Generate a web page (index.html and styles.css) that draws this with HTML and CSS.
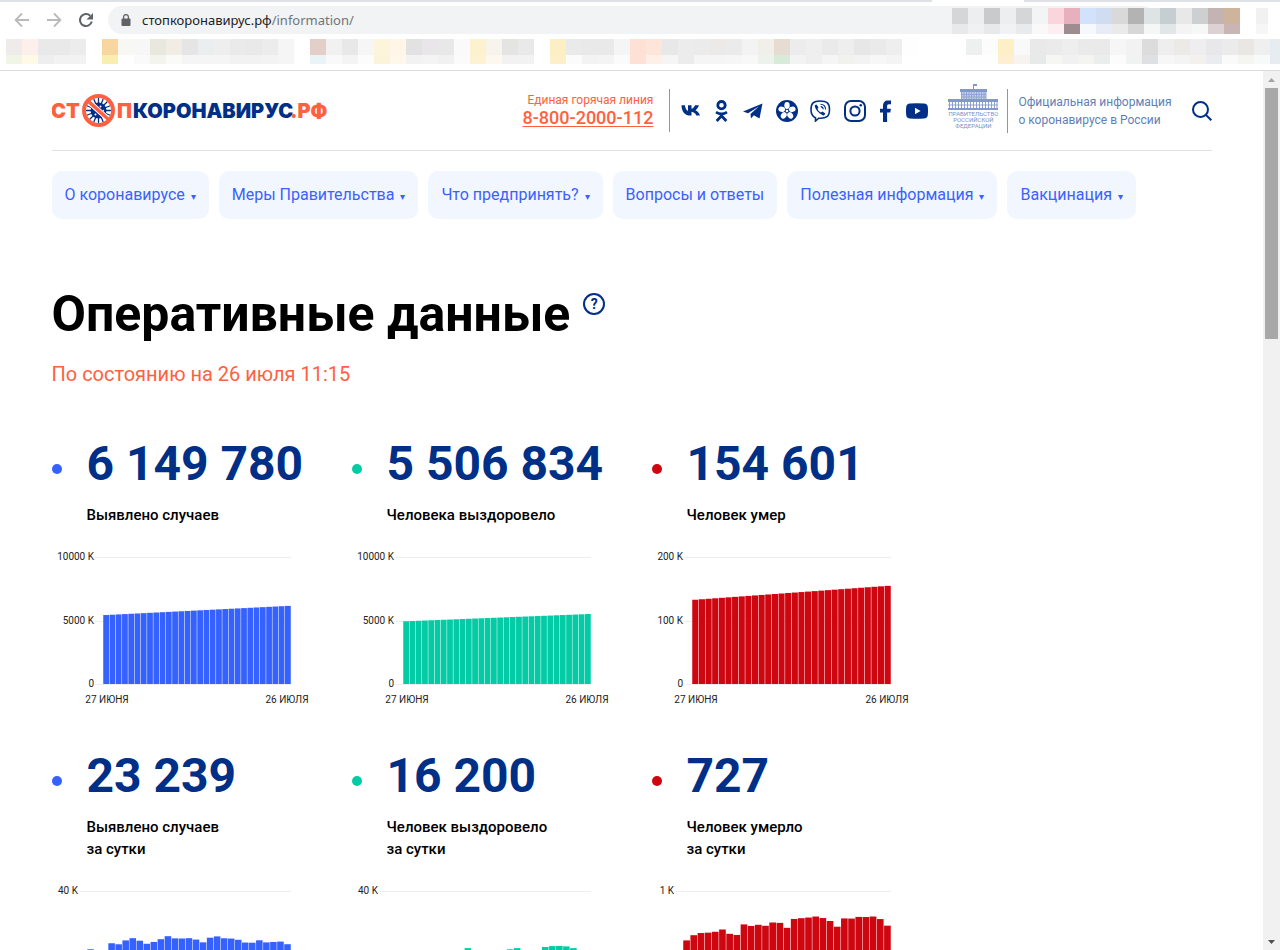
FILE: index.html
```html
<!DOCTYPE html>
<html lang="ru">
<head>
<meta charset="utf-8">
<title>Оперативные данные</title>
<link rel="stylesheet" href="styles.css">
</head>
<body>
<div class="browser">
  <div class="tabs-edge"><span class="active-tab"></span></div>
  <div class="toolbar">
    <button class="tool" aria-label="Назад"><svg width="16" height="16" viewBox="0 0 16 16" fill="none" stroke="#bababc" stroke-width="1.8"><path d="M15 8H2M8 1.5 1.6 8 8 14.5"/></svg></button>
    <button class="tool" aria-label="Вперёд"><svg width="16" height="16" viewBox="0 0 16 16" fill="none" stroke="#bababc" stroke-width="1.8"><path d="M1 8h13M8 1.5 14.4 8 8 14.5"/></svg></button>
    <button class="tool" aria-label="Обновить"><svg width="16" height="16" viewBox="0 0 16 16"><path d="M13.8 9.5A6 6 0 1 1 12.2 3.8" fill="none" stroke="#5f6368" stroke-width="2"/><path d="M15 1v6.500H8.500z" fill="#5f6368"/></svg></button>
    <div class="address">
      <svg width="10" height="13" viewBox="0 0 10 13"><rect y="4.5" x=".5" width="9" height="7.5" rx="1" fill="#5f6368"/><path d="M2.6 5V3a2.4 2.4 0 0 1 4.8 0v2" fill="none" stroke="#5f6368" stroke-width="1.3"/></svg>
      <span>стопкоронавирус.рф<span class="path">/information/</span></span>
    </div>
    <svg class="extensions" id="extensions" width="316" height="27"></svg>
  </div>
  <svg class="bookmarks" id="bookmarks" height="26"></svg>
</div>
<div class="viewport">
<div class="page">
<div class="container">
  <header class="header">
    <a class="logo" href="#" aria-label="стопкоронавирус.рф">
      <svg width="277" height="36" viewBox="0 0 277 36">
        <g class="logo-text">
          <text x="-1" y="25" fill="#ff6140">СТ</text>
          <text x="65" y="25" fill="#ff6140">П</text>
          <text x="81" y="25" fill="#002f87">КОРОНАВИРУС</text>
          <text x="238" y="25" fill="#ff6140">.РФ</text>
        </g>
        <g transform="translate(46.500 17.500)">
          <g stroke="#002f87" stroke-width="1.3" stroke-linecap="round"><path d="M0-12V12M-12 0H12M-8.500-8.500 8.500 8.500M-8.500 8.500 8.500-8.500M-4.500-11 4.500 11M4.500-11-4.500 11M-11-4.500 11 4.500M-11 4.500 11-4.500"/></g>
          <circle r="8" fill="#002f87"/>
          <g fill="#fff"><circle cx="2" cy="-4" r="1"/><circle cx="-3" cy="4" r="1"/><circle cx="5" cy="0" r=".7"/></g>
          <path d="M-10-9 10 9" stroke="#fff" stroke-width="5.500"/>
          <path d="M-10-9 10 9" stroke="#ff6140" stroke-width="3.600"/>
          <circle r="14.500" fill="none" stroke="#ff6140" stroke-width="4"/>
        </g>
      </svg>
    </a>
    <div class="hotline"><span>Единая горячая линия</span><a href="tel:88002000112">8-800-2000-112</a></div>
    <nav class="social" aria-label="Социальные сети">
      <a href="#" aria-label="ВКонтакте"><svg width="21" height="22" viewBox="0 0 21 22"><path d="M.5 5.200H3.900C4.300 8.500 5.700 10.400 7 11V5.200H10.500V8.800C12 8.500 13.300 6.800 14 5.200H17.900C17.200 7.500 15.600 9.300 14.500 10.200C16.200 11.100 17.900 12.500 19 15.500H15.300C14.600 13.600 12.700 12 10.500 11.800V15.500H9.500C4 15.500.7 12 .5 5.200Z"/></svg></a>
      <a href="#" aria-label="Одноклассники"><svg width="16" height="22" viewBox="0 0 16 22"><g fill="none" stroke="currentColor" stroke-width="2.800"><circle cx="7.500" cy="5.200" r="3.700"/><path d="M2 12.200Q7.500 15.800 13 12.200M2.700 21 7.500 15.800 12.300 21"/></g></svg></a>
      <a href="#" aria-label="Telegram"><svg width="22" height="22" viewBox="0 0 22 22"><path d="M1 11.500 20.500 3.500 17.500 18.500 11.800 15.200 9 18.500 8.500 14 16.800 6.500 6 13.200Z"/></svg></a>
      <a href="#" aria-label="Мессенджер"><svg width="22" height="22" viewBox="0 0 22 22"><circle cx="11" cy="11" r="11"/><g fill="#fff"><ellipse cx="11" cy="5.500" rx="2.700" ry="3.400"/><ellipse cx="11" cy="5.500" rx="2.700" ry="3.400" transform="rotate(72 11 11)"/><ellipse cx="11" cy="5.500" rx="2.700" ry="3.400" transform="rotate(144 11 11)"/><ellipse cx="11" cy="5.500" rx="2.700" ry="3.400" transform="rotate(216 11 11)"/><ellipse cx="11" cy="5.500" rx="2.700" ry="3.400" transform="rotate(288 11 11)"/><circle cx="11" cy="11" r="1.300"/></g></svg></a>
      <a href="#" aria-label="Viber"><svg width="22" height="22" viewBox="0 0 22 22"><path d="M10 1C3.500 1 1 3.200 1 9.500C1 14 2.300 16.500 5.500 17.700V21L8.700 18.200C16.500 18.700 19.500 16.500 19.500 9.500C19.500 3.200 17 1 10 1Z" fill="none" stroke="currentColor" stroke-width="1.600"/><path d="M6.400 4.400 8.500 7.200 7.600 8.800C8 10.600 9.200 11.800 10.900 12.400L12.500 11.500 15.300 13.600C14.900 15.100 13.900 15.800 12.700 15.200C8.600 13.200 6 10.500 4.800 6.500C4.500 5.400 5.300 4.600 6.400 4.400Z"/><path d="M10.500 4.200C13.800 4.300 15.500 6.200 15.600 9.500M10.700 6.600C12.400 6.800 13.200 7.700 13.300 9.300" fill="none" stroke="currentColor" stroke-width="1.100"/></svg></a>
      <a href="#" aria-label="Instagram"><svg width="22" height="22" viewBox="0 0 22 22"><g fill="none" stroke="currentColor" stroke-width="2"><rect x="1" y="1" width="20" height="20" rx="6"/><circle cx="11" cy="11" r="4.600"/></g><circle cx="16.800" cy="5.200" r="1.300"/></svg></a>
      <a href="#" aria-label="Facebook"><svg width="16" height="22" viewBox="0 0 16 22"><path d="M5 22V12.500H2V8.700H5V6C5 2.500 6.800.5 10 .5H13V4.200H11C9.500 4.200 9.100 4.900 9.100 6.200V8.700H12.900L12.300 12.500H9.100V22Z"/></svg></a>
      <a href="#" aria-label="YouTube"><svg width="22" height="22" viewBox="0 0 22 22"><path fill-rule="evenodd" d="M4 3.500Q11 2.800 18 3.500Q21.500 3.700 21.800 7Q22.200 11 21.800 15Q21.500 18.200 18 18.500Q11 19.200 4 18.500Q.5 18.200.2 15Q-.2 11 .2 7Q.5 3.700 4 3.500ZM9 7.700V14.300L14.600 11Z"/></svg></a>
    </nav>
    <div class="gov">
      <svg width="50" height="27" viewBox="0 0 50 27">
        <g fill="#8298cc"><path d="M25 0h4v2h-3v4h-1z"/><rect x="12" y="5" width="27" height="3"/><path d="M0 15h13v-1h25v1h12v3H0z"/><rect y="24" width="50" height="2"/></g>
        <path fill="#c3cee7" d="M13 8h25v7H13z"/>
        <g stroke="#93a5d2" fill="none"><path d="M13.500 8v7M16 8v7M18.500 8v7M21 8v7M23.500 8v7M26 8v7M28.500 8v7M31 8v7M33.500 8v7M36 8v7M38 8v7M13 10.500h25M13 13h25"/></g>
        <g stroke="#8da0cf" fill="none"><path d="M1.500 18v6M4.500 18v6M7.500 18v6M10.500 18v6M13.500 18v6M16.500 18v6M19.500 18v6M22.500 18v6M25.500 18v6M28.500 18v6M31.500 18v6M34.500 18v6M37.500 18v6M40.500 18v6M43.500 18v6M46.500 18v6M49 18v6M0 21h50"/></g>
      </svg>
      <span>ПРАВИТЕЛЬСТВО<br>РОССИЙСКОЙ<br>ФЕДЕРАЦИИ</span>
    </div>
    <p class="official">Официальная информация<br>о коронавирусе в России</p>
    <button class="search" aria-label="Поиск"><svg width="20" height="20" viewBox="0 0 20 20" fill="none" stroke="#002f87" stroke-width="2"><circle cx="8.500" cy="8.500" r="7.500"/><path d="m14 14 5.300 5.300"/></svg></button>
  </header>
  <nav class="menu" aria-label="Основное меню">
    <button>О коронавирусе <i>▾</i></button>
    <button>Меры Правительства <i>▾</i></button>
    <button>Что предпринять? <i>▾</i></button>
    <a href="#">Вопросы и ответы</a>
    <button>Полезная информация <i>▾</i></button>
    <button>Вакцинация <i>▾</i></button>
  </nav>
  <main>
    <div class="title">
      <h1>Оперативные данные</h1>
      <button class="help" aria-label="Справка">?</button>
    </div>
    <p class="updated">По состоянию на 26 июля 11:15</p>
    <section class="stats">
      <article class="stat blue"><h2>6 149 780</h2><p>Выявлено случаев</p><svg class="chart" data-chart="cases"></svg></article>
      <article class="stat green"><h2>5 506 834</h2><p>Человека выздоровело</p><svg class="chart" data-chart="recovered"></svg></article>
      <article class="stat red"><h2>154 601</h2><p>Человек умер</p><svg class="chart" data-chart="deaths"></svg></article>
      <article class="stat blue"><h2>23 239</h2><p>Выявлено случаев<br>за сутки</p><svg class="chart" data-chart="casesDaily"></svg></article>
      <article class="stat green"><h2>16 200</h2><p>Человек выздоровело<br>за сутки</p><svg class="chart" data-chart="recoveredDaily"></svg></article>
      <article class="stat red"><h2>727</h2><p>Человек умерло<br>за сутки</p><svg class="chart" data-chart="deathsDaily"></svg></article>
    </section>
  </main>
</div>
</div>
<div class="scrollbar" aria-hidden="true">
  <svg width="17" height="17" viewBox="0 0 17 17"><path d="M5 11 8.500 7 12 11z" fill="#a3a3a3"/></svg>
  <span class="thumb"></span>
  <svg width="17" height="17" viewBox="0 0 17 17"><path d="M5 7 8.500 11 12 7z" fill="#505050"/></svg>
</div>
</div>
<script src="script.js"></script>
</body>
</html>
```

FILE: styles.css
```css
* { box-sizing: border-box; }
body {
  margin: 0;
  height: 100vh;
  overflow: hidden;
  display: flex;
  flex-direction: column;
  background: #fff;
  font-family: Roboto, "Liberation Sans", sans-serif;
  color: #000;
}
h1, h2, p { margin: 0; }
a { color: inherit; text-decoration: none; }
button { border: 0; padding: 0; background: none; font: inherit; color: inherit; cursor: pointer; }
svg { display: block; }

.browser { flex: none; height: 71px; border-bottom: 1px solid #dadbdc; overflow: hidden; }
.tabs-edge { height: 2px; background: #dee1e6; display: flex; justify-content: flex-end; padding-right: 256px; }
.active-tab { width: 92px; background: #fff; }
.toolbar { display: flex; align-items: center; height: 36px; padding: 0 12px 0 14px; gap: 16px; }
.tool { flex: none; width: 16px; }
.address {
  flex: 1;
  display: flex;
  align-items: center;
  gap: 11px;
  height: 28px;
  padding-left: 13px;
  margin-left: -2px;
  border-radius: 14px;
  background: #f1f3f4;
  font-family: "Noto Sans", "Open Sans", sans-serif;
  font-size: 13px;
  color: #202124;
}
.path { color: #70757a; }
.extensions { flex: none; margin-left: -220px; }
.bookmarks { width: 100%; margin-top: 1px; }

.viewport { flex: 1; min-height: 0; display: flex; }
.page { flex: 1; min-width: 0; overflow-x: hidden; overflow-y: auto; scrollbar-width: none; }
.container { max-width: 1160px; margin: 0 auto; }
.scrollbar { flex: none; width: 17px; background: #f1f1f1; display: flex; flex-direction: column; }
.thumb { width: 13px; height: 251px; margin: 0 2px auto; background: #a8a8a8; }

.header { display: flex; align-items: center; height: 80px; border-bottom: 1px solid #dfe1e5; }
.logo { margin-right: auto; }
.logo-text { font: 900 20px Inter, Roboto, sans-serif; }
.hotline {
  display: flex;
  flex-direction: column;
  align-items: flex-end;
  justify-content: center;
  height: 43px;
  padding-right: 16px;
  border-right: 1px solid #7f97c3;
  font-size: 12px;
  line-height: 14px;
  color: #ff6140;
}
.hotline a { font-size: 18px; font-weight: 500; line-height: 21px; text-decoration: underline; text-underline-offset: 2px; text-decoration-thickness: 1px; }
.social { display: flex; align-items: center; gap: 12px; margin-left: 11px; color: #002f87; fill: #002f87; }
.gov {
  width: 50px;
  margin: 0 9px 0 20px;
  padding-bottom: 8px;
  color: #7b92c8;
  text-align: center;
  font-size: 6px;
  line-height: 6px;
  white-space: nowrap;
  display: flex;
  flex-direction: column;
  align-items: center;
}
.official {
  border-left: 1px solid #7f97c3;
  height: 44px;
  padding: 4px 0 0 10px;
  margin-right: 20px;
  font-size: 12px;
  line-height: 18px;
  color: #5f7fb5;
}

.menu { display: flex; gap: 10px; margin-top: 20px; }
.menu > * {
  height: 48px;
  padding: 0 13px;
  border-radius: 10px;
  background: #f2f6ff;
  color: #3b61ff;
  font-size: 16px;
  line-height: 48px;
  white-space: nowrap;
}
.menu i { font-style: normal; font-size: 10px; margin-left: 2px; }

.title { display: flex; gap: 13px; margin-top: 66px; }
h1 { font-size: 50px; line-height: 58px; font-weight: 700; }
.help {
  width: 22px;
  height: 22px;
  margin-top: 8px;
  border: 2px solid #002f87;
  border-radius: 50%;
  color: #002f87;
  font-size: 14px;
  font-weight: 700;
  line-height: 18px;
}
.updated { margin-top: 19px; font-size: 20px; line-height: 24px; color: #ff6140; }

.stats { display: grid; grid-template-columns: repeat(3, 300px); margin-top: 48px; row-gap: 27px; }
.stat { --tone: #3561ff; }
.stat.green { --tone: #03cba5; }
.stat.red { --tone: #cd0610; }
.stat h2 { display: flex; align-items: center; font-size: 48px; line-height: 60px; font-weight: 700; color: #002f87; white-space: nowrap; }
.stat h2::before { content: ""; width: 10px; height: 10px; margin: 10px 25px 0 0; border-radius: 50%; background: var(--tone); }
.stat p { margin: 10px 0 23px 35px; font-size: 15px; line-height: 22px; font-weight: 500; }
.chart { width: 270px; height: 170px; }
.chart text { font-size: 10px; fill: #222; }
.chart .grid { stroke: #eeeeee; }
.chart .bar { fill: var(--tone); }
```

FILE: script.js
```js
const NS = "http://www.w3.org/2000/svg";

function add(parent, name, attrs, text) {
  const el = document.createElementNS(NS, name);
  for (const key in attrs) el.setAttribute(key, attrs[key]);
  if (text) el.textContent = text;
  parent.appendChild(el);
  return el;
}

function ramp(from, to) {
  return Array.from({ length: 30 }, (_, i) => from + (to - from) * i / 29);
}

const charts = {
  cases: { max: 10000, labels: ["10000 K", "5000 K", "0"], left: 51, data: ramp(5430, 6150) },
  recovered: { max: 10000, labels: ["10000 K", "5000 K", "0"], left: 51, data: ramp(4940, 5507) },
  deaths: { max: 200, labels: ["200 K", "100 K", "0"], left: 40, data: ramp(132.7, 154.6) },
  casesDaily: { max: 40000, labels: ["40 K", "20 K", "0"], left: 35, data: [21650, 20616, 21042, 23543, 23218, 24439, 25142, 24353, 23378, 23962, 24818, 25766, 25082, 25033, 25140, 24702, 23827, 25293, 25704, 25116, 25018, 24633, 23770, 23704, 24471, 23811, 23947, 24072, 23239] },
  recoveredDaily: { max: 40000, labels: ["40 K", "20 K", "0"], left: 35, data: [15300, 16500, 17900, 18100, 18400, 19100, 18700, 17600, 18300, 19900, 20300, 22000, 19900, 17200, 18600, 19800, 20600, 21650, 22000, 20200, 18100, 19500, 22350, 22650, 22700, 22550, 22000, 19200, 16200] },
  deathsDaily: { max: 1000, labels: ["1 K", "0.5 K", "0"], left: 31, data: [611, 652, 669, 672, 679, 697, 663, 654, 737, 725, 734, 726, 752, 749, 710, 780, 786, 791, 799, 787, 764, 719, 784, 783, 796, 795, 799, 779, 727] }
};

document.querySelectorAll("[data-chart]").forEach(svg => {
  const { max, labels, left, data } = charts[svg.dataset.chart];
  const right = 239, top = 8, height = 127, labelEnd = left - 9;
  labels.forEach((label, i) => {
    const y = top + Math.round(height * i / 2);
    add(svg, "text", { x: labelEnd, y: y + 3, "text-anchor": "end" }, label);
    add(svg, "line", { class: "grid", x1: labelEnd + 1, x2: right, y1: y + 0.5, y2: y + 0.5 });
  });
  const step = (right - left) / data.length;
  data.forEach((value, i) => {
    const h = height * value / max;
    add(svg, "rect", { class: "bar", x: left + i * step + 0.25, y: top + height - h, width: step - 0.5, height: h });
  });
  add(svg, "text", { x: left + 4, y: 154, "text-anchor": "middle" }, "27 ИЮНЯ");
  add(svg, "text", { x: right - 4, y: 154, "text-anchor": "middle" }, "26 ИЮЛЯ");
});

// Tile colours are hex strings; "-" leaves a gap.
function tiles(id, startX, y, rows) {
  const svg = document.getElementById(id);
  rows.forEach(([height, colours]) => {
    colours.split(" ").forEach((c, i) => {
      if (c !== "-") add(svg, "rect", { x: startX + i * 16, y, width: 16, height, fill: "#" + c });
    });
    y += height;
  });
}

tiles("bookmarks", 6, 0, [
  [16, "f0ebeb fdf0ec e9e9e9 e9e9e9 ececec - f7d6a0 f7f7f3 f7f7f7 e8e8df f1ede5 e5e5e5 ebeeee eeeeee eaeaea e9e9e9 ececec f5f5f5 - e4cfc8 f1f1f1 e8e8e8 f6f6f6 fdf4dc fff6e8 e2e2e2 e9e6ea e8e8e8 fafafa fcf2cf f7f4ed e4e4e2 e9e9e9 - fcefc4 eaeaea e9e9e9 e9e9e9 f5f5f5 ffe0d4 fde5da e8e8e8 ececec ebebeb ece9e9 ebebeb f3f3f3 f0efe9 e6dcd2 ececec efefef eaeaea eeeeee e7e7e7 eaeaea eeeeee fefefe - - - edf0ef fcfcfc fdf0c6 f9f9f9 e9e9e9 ebebeb eeeeee eaeaea eaeaea f6f6f6 f2f2f2 dcdcdc eeeeee eceae7 eeeef0 e8e8ea ebebeb e8e7e4 efefef e6ecf2"],
  [9, "f0f5e5 fff9e8 eeeeee f2f2f2 f2f2f2 - f9edb0 fefefe fafafa f4f4ef fafaf7 f5f5f5 f5f5f5 f5f5f5 f2f2f2 f2f2f2 f3f3f3 f5f5f5 - eaf4f7 f9f9f9 f4f4f4 fcfcfc fcf4da fff7e9 f2f2f2 f4f4f4 f1f1f1 fbfbfb fdf3d3 fcf8ee f2f2f2 f2f2f2 - fcefc9 fbfbfb f3f3f3 f4f4f4 fbfbfb ffe0d4 fff0e7 f5f5f5 ececec f5f5f5 f5f5f5 f6f6f6 f8f8f8 edf2ed d8ead8 f3f3f3 efefef f5f5f5 f1f1ee f3f3f3 f7f7f7 f4f4f4 - - - - fefefe fefefe fdefcf f6f3f0 e7eae9 f6f6f4 f1f1f1 f4f4f3 eceeee fcfcfc f1f3f3 dfe0e2 f7f7f7 f4f4f4 f3f1ed ebecef fafafa f5f5f2 f8fafa e6ecf2"]
]);
tiles("extensions", 0, 1, [
  [16, "d4d6d7 eceef0 c8cacc eceef0 d4d6d7 f3f4f6 fad5dc e8b0bc d2e2fc d0dcf0 d9d9d9 b3b3b3 dee3e6 c6ced1 e8e8e8 cdcfd1 c3b3b3 cfb49c - f1f1f1"],
  [10, "e8e9eb f0f1f3 e8e9eb f1f2f4 e9eaec f9f9fa fdeef1 9f8c90 f7f8fd e8ecf7 eaeaea d7d7d7 f5f6f6 e1e6e8 f4f4f4 f6f8f7 ddd1d3 c9b6b4 - f6f6f6"]
]);
```
